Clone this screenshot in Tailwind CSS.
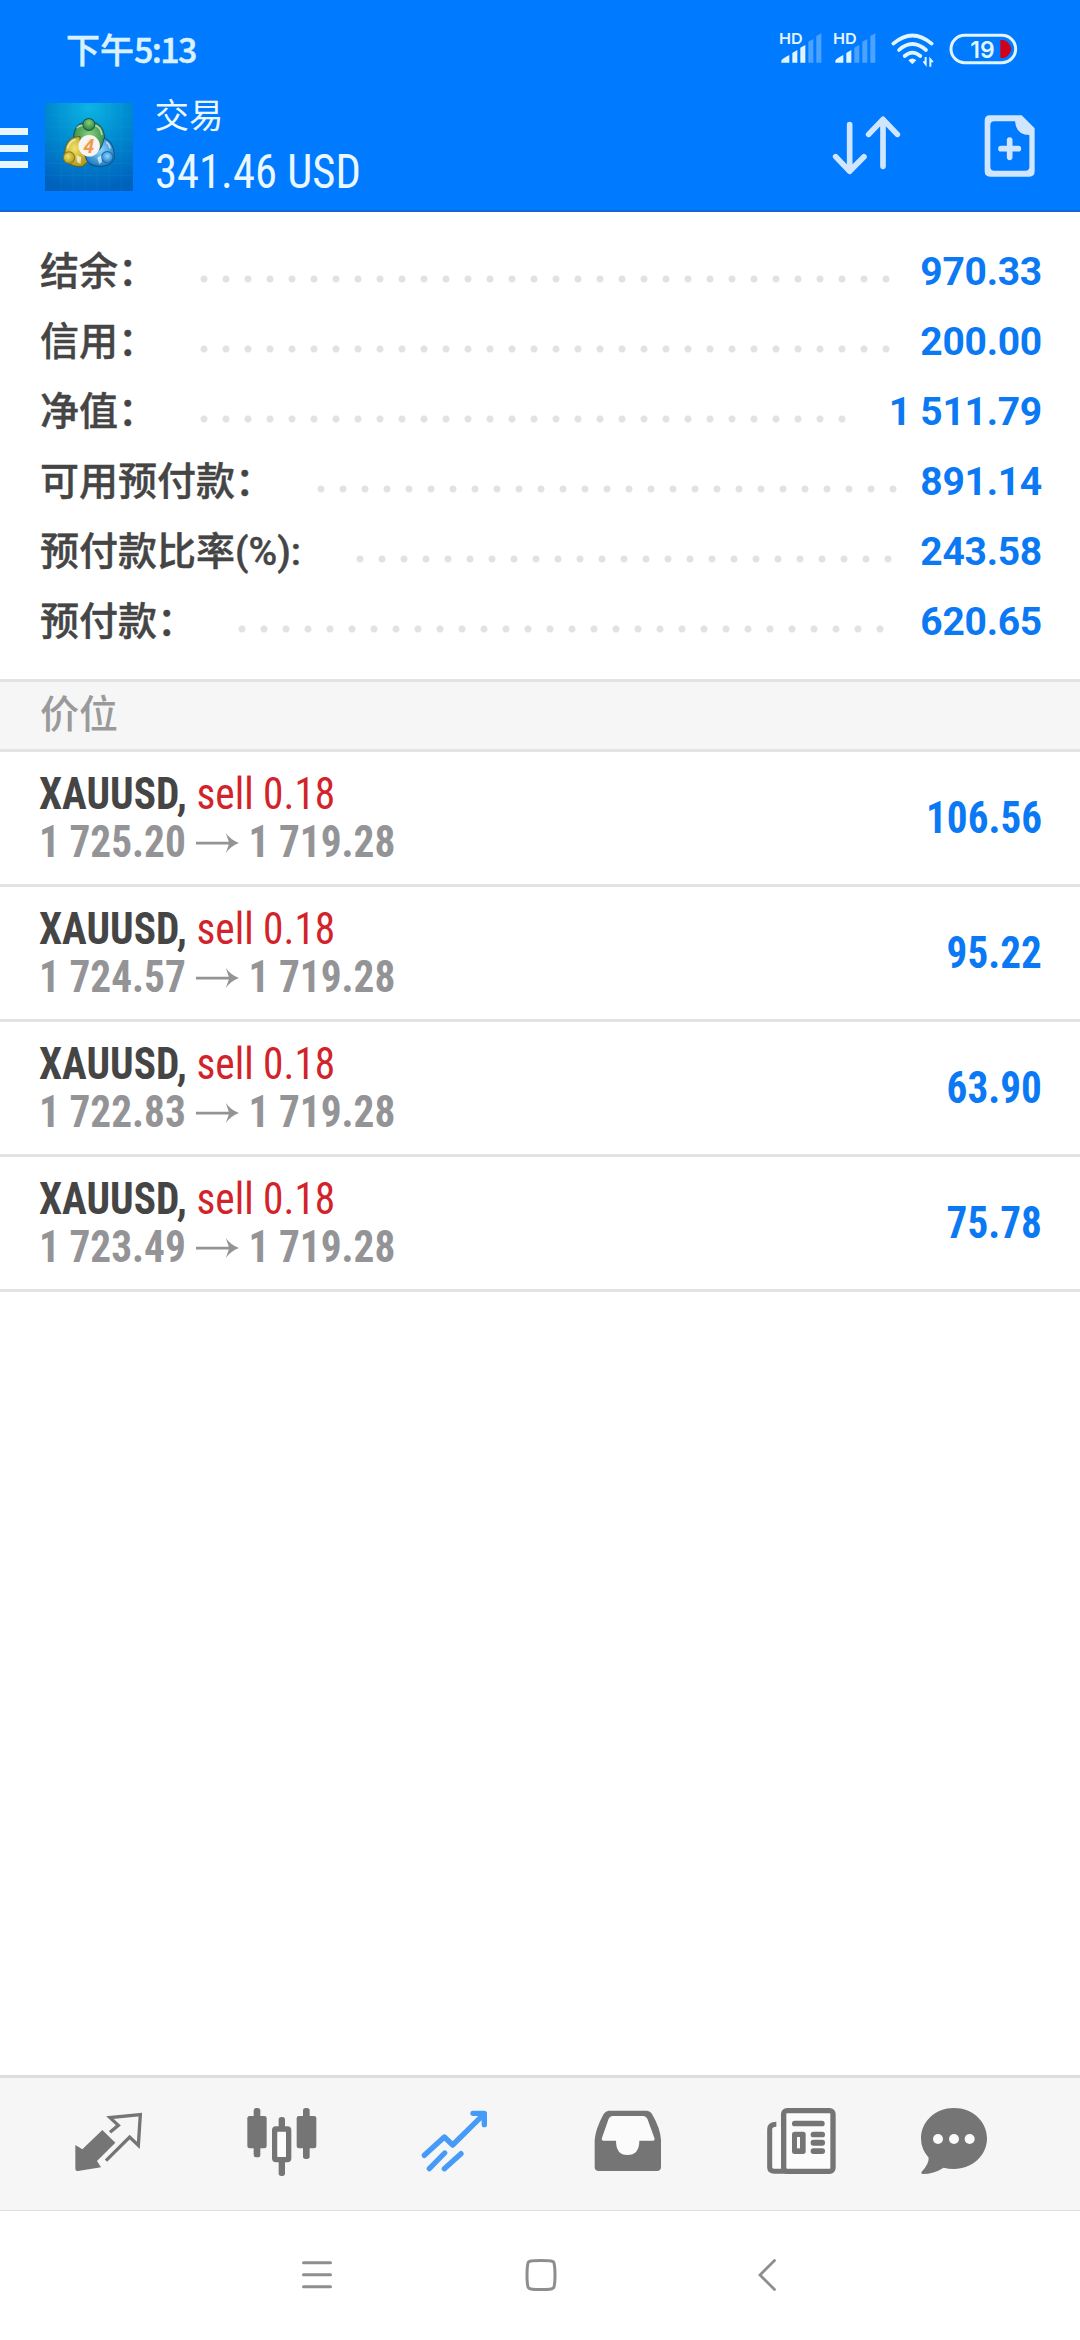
<!DOCTYPE html>
<html lang="zh-CN">
<head>
<meta charset="utf-8">
<title>交易</title>
<script src="https://cdn.jsdelivr.net/npm/@tailwindcss/browser@4"></script>
</head>
<body class="bg-white">
<div class="flex h-[2340px] w-[1080px] flex-col overflow-hidden bg-white font-['Roboto','Noto_Sans_CJK_SC',sans-serif] text-[#454545]">

  <header class="flex h-[212px] shrink-0 flex-col border-b-2 border-[#1266d6] bg-[#007aff] text-[#eaf7ff]">
    <div class="flex h-[96px] shrink-0 items-start justify-between pl-[66px] pr-[59px] pt-[30px]">
      <div class="-mt-px font-['Noto_Sans_CJK_SC',sans-serif] text-[34px] font-medium leading-[40px] text-[#d9f1ff] [-webkit-text-stroke:0.5px]">下午<span class="tracking-[-1.6px]">5:13</span></div>
      <svg class="h-[40px] w-[243.33px]" viewBox="50 90 730 120" fill="#e2f5ff">
        <g font-family="Inter, sans-serif" font-weight="600" font-size="45">
          <text x="53" y="132" textLength="71" lengthAdjust="spacingAndGlyphs">HD</text>
          <text x="215" y="132" textLength="71" lengthAdjust="spacingAndGlyphs">HD</text>
        </g>
        <path d="M60 188V182Q62 176 84 165V188ZM93 188V159L108 150V188ZM117 188V143L132 135V188Z"/>
        <path d="M141 188V125L156 117V188ZM165 188V108L180 100V188Z" fill="#4ca3ff"/>
        <path d="M222 188V182Q224 176 246 165V188ZM255 188V159L270 150V188Z"/>
        <path d="M279 188V143L294 135V188ZM303 188V125L318 117V188ZM327 188V108L342 100V188Z" fill="#4ca3ff"/>
        <g fill="none" stroke="#e2f5ff" stroke-width="11" stroke-linecap="round">
          <path d="M396 131Q453 82 511 131"/>
          <path d="M413 150Q453 114 494 150"/>
          <path d="M430 168Q453 148 477 168"/>
        </g>
        <path d="M441 181Q453 170 465 181L453 193Z"/>
        <path d="M490 171H496V201L485 187V184H490ZM504 200V170L516 184V187H510V200Z"/>
        <rect x="569" y="106" width="194" height="82" rx="41" fill="none" stroke="#e2f5ff" stroke-width="9"/>
        <text x="627" y="173" font-family="Inter, sans-serif" font-weight="600" font-size="70" textLength="73" lengthAdjust="spacingAndGlyphs">19</text>
        <path d="M717 120H727Q745 125 750 147Q745 170 727 174H717Z" fill="#d0021b"/>
      </svg>
    </div>

    <div class="flex h-[114px] items-start">
      <div class="mt-[32px] flex w-[28px] flex-col gap-[9.5px]">
        <div class="h-[7px] bg-[#e8f6ff]"></div>
        <div class="h-[7px] bg-[#e8f6ff]"></div>
        <div class="h-[7px] bg-[#e8f6ff]"></div>
      </div>
      <svg class="ml-[16.5px] mt-[6.5px] size-[88px]" viewBox="28 24 263 263">
        <defs>
          <radialGradient id="sky" cx="0.5" cy="0.05" r="0.95"><stop offset="0" stop-color="#0cb4e4"/><stop offset="0.5" stop-color="#0089cf"/><stop offset="1" stop-color="#0062bd"/></radialGradient>
          <radialGradient id="green" cx="0.5" cy="0.35" r="0.6"><stop offset="0" stop-color="#8ad07c"/><stop offset="1" stop-color="#2c8540"/></radialGradient>
          <radialGradient id="gold" cx="0.4" cy="0.4" r="0.6"><stop offset="0" stop-color="#f2e265"/><stop offset="1" stop-color="#b39a20"/></radialGradient>
          <radialGradient id="blue" cx="0.5" cy="0.4" r="0.6"><stop offset="0" stop-color="#8fd8ff"/><stop offset="1" stop-color="#1f7cc4"/></radialGradient>
        </defs>
        <rect x="28" y="24" width="263" height="263" fill="url(#sky)"/>
        <path d="M76 24V287M112 24V287M148 24V287M184 24V287M220 24V287M256 24V287M28 60H291M28 96H291M28 132H291M28 168H291M28 204H291M28 240H291" stroke="#35c0ee" stroke-opacity="0.16" stroke-width="2"/>
        <g stroke="#155a50" stroke-width="3">
          <path d="M114 140Q110 96 138 84H182Q210 100 206 142Q196 176 160 186Q120 174 114 140Z" fill="url(#green)"/>
          <path d="M132 124C96 124 84 156 88 184C92 210 124 218 142 212L160 196Q134 172 132 124Z" fill="url(#gold)" stroke="#5c6420"/>
          <path d="M204 130C226 134 238 164 234 192C222 218 180 218 160 204Q146 192 152 178Q196 180 204 130Z" fill="url(#blue)" stroke="#15508a"/>
          <circle cx="159" cy="88" r="18" fill="url(#green)"/>
          <circle cx="100" cy="187" r="17" fill="url(#gold)" stroke="#8a7a1c"/>
          <circle cx="214" cy="186" r="17" fill="url(#blue)" stroke="#1b6cb0"/>
        </g>
        <path d="M124 98Q132 90 138 92M180 92Q194 96 198 118M96 158Q102 138 118 134M222 158Q220 146 212 142" fill="none" stroke="#fff" stroke-opacity="0.6" stroke-width="5" stroke-linecap="round"/>
        <path d="M122 180L136 186L134 206L124 200ZM196 180L184 188L190 206L198 200Z" fill="#fff" fill-opacity="0.65"/>
        <circle cx="160" cy="152" r="32" fill="#f7f4f2"/>
        <text x="159" y="172" text-anchor="middle" font-family="Open Sans, sans-serif" font-style="italic" font-weight="700" font-size="56" fill="#f39a4a">4</text>
      </svg>
      <div class="ml-[22px] flex flex-col">
        <div class="-mt-[3px] font-['Noto_Sans_CJK_SC',sans-serif] text-[34.5px] leading-[40px]">交易</div>
        <div class="mt-[11px] origin-left scale-x-[0.93] font-['Roboto_Condensed',sans-serif] text-[48px] leading-[56px]">341.46 USD</div>
      </div>
      <svg class="ml-auto mt-[14px] h-[70px] w-[80px]" viewBox="200 330 240 210" fill="none" stroke="#cfe6fe" stroke-width="17" stroke-linecap="round" stroke-linejoin="round">
        <path d="M265 374V512M223 470L265 514L308 470"/>
        <path d="M365 499V360M322 403L365 358L408 403"/>
      </svg>
      <svg class="ml-[72px] mr-[40px] mt-[14px] h-[70px] w-[60px]" viewBox="655 330 180 210">
        <path d="M685 346H780L819 385V514Q819 530 803 530H685Q669 530 669 514V362Q669 346 685 346ZM698 364Q686 364 686 376V500Q686 512 698 512H791Q803 512 803 500V405Q763 405 760 364Z" fill="#cfe6fe" fill-rule="evenodd"/>
        <path d="M744 420V472M718 446H770" stroke="#cfe6fe" stroke-width="17" stroke-linecap="round"/>
      </svg>
    </div>
  </header>

  <section id="summary" class="flex h-[467px] shrink-0 flex-col pl-[40px] pr-[38px] pt-[24px] text-[39px] font-medium"></section>

  <div class="flex h-[73px] shrink-0 items-center border-y-3 border-[#e3e3e3] bg-[#f6f6f6] pb-[9px] pl-[40px] font-['Noto_Sans_CJK_SC',sans-serif] text-[39px] font-medium text-[#9a9a9c]">价位</div>

  <section id="positions" class="flex flex-col font-['Roboto_Condensed',sans-serif]"></section>

  <nav class="mt-auto flex h-[136px] shrink-0 items-start gap-[93px] border-b border-t-3 border-b-[#dedede] border-t-[#dedede] bg-[#f6f6f6] pl-[69px] pt-[24px] text-[#757575]">
    <svg class="size-[80px] shrink-0" viewBox="87 126 240 240">
      <path d="M187 210L226 248L171 303L183 322L114 333Q106 334 106 326V255L127 268Z" fill="currentColor"/>
      <path d="M210 217L235 196L210 173L301 164L295 256L269 231L198 302" fill="none" stroke="currentColor" stroke-width="10"/>
    </svg>
    <svg class="size-[80px] shrink-0" viewBox="604 126 240 240" fill="currentColor">
      <rect x="620" y="168" width="58" height="97" rx="7"/><rect x="639" y="144" width="20" height="148" rx="8"/>
      <rect x="768" y="168" width="59" height="97" rx="7"/><rect x="787" y="144" width="20" height="153" rx="8"/>
      <rect x="714" y="171" width="19" height="40" rx="8"/><rect x="714" y="295" width="19" height="53" rx="8"/>
      <rect x="702" y="207" width="42" height="92" rx="4" fill="none" stroke="currentColor" stroke-width="16"/>
      <rect x="711" y="216" width="24" height="74" rx="5" fill="#fdfdfd"/>
    </svg>
    <svg class="size-[80px] shrink-0 text-[#459bf7]" viewBox="1124 126 240 240" fill="none" stroke="currentColor" stroke-width="16" stroke-linecap="round" stroke-linejoin="round">
      <path d="M1152 286L1212 231L1237 255L1330 163M1298 160H1332V194M1167 326L1213 279M1212 326L1262 281"/>
      <path d="M1310 160H1332V184Z" fill="currentColor" stroke-width="6"/>
    </svg>
    <svg class="size-[80px] shrink-0" viewBox="143 126 240 240">
      <path d="M205 152H320Q330 153 335 162Q360 205 362 240V320Q362 333 349 333H176Q163 333 163 320V240Q166 205 190 162Q196 153 205 152Z" fill="currentColor"/>
      <path d="M216 168H309Q317 168 321 176L343 236Q343 242 338 242H297Q297 285 261 285Q227 285 227 242H189Q184 242 184 236L205 176Q209 168 216 168Z" fill="#fbfbfb"/>
    </svg>
    <svg class="size-[80px] shrink-0" viewBox="662 126 240 240" fill="currentColor">
      <path d="M700 326V205Q700 199 707 199H722V330H700Z" fill="#fbfbfb"/>
      <rect x="730" y="152" width="148" height="182" rx="10" fill="#fbfbfb" stroke="currentColor" stroke-width="16"/>
      <path d="M708 193Q688 193 688 208V322Q688 334 702 334H740" fill="none" stroke="currentColor" stroke-width="15"/>
      <rect x="755" y="182" width="98" height="17" rx="8"/>
      <rect x="755" y="215" width="41" height="67" rx="8"/><rect x="770" y="231" width="9" height="34" fill="#fbfbfb"/>
      <rect x="811" y="215" width="43" height="17" rx="8"/><rect x="811" y="239" width="43" height="18" rx="8"/><rect x="811" y="265" width="43" height="17" rx="8"/>
    </svg>
    <svg class="-ml-[20.5px] size-[80px] shrink-0" viewBox="1119 126 240 240">
      <path d="M1239 144C1294 144 1338 184 1338 235S1294 327 1239 327Q1222 327 1208 323Q1178 342 1145 342Q1139 341 1142 335Q1164 312 1163 293Q1140 268 1140 235C1140 184 1184 144 1239 144Z" fill="currentColor"/>
      <g fill="#fbfbfb"><circle cx="1191" cy="237" r="15"/><circle cx="1239" cy="237" r="15"/><circle cx="1286" cy="237" r="15"/></g>
    </svg>
  </nav>

  <div class="flex h-[129px] shrink-0 items-start justify-between pl-[300px] pr-[302px] pt-[46px]">
    <svg class="h-[36px] w-[34px]" viewBox="0 0 34 36" stroke="#8e8e8e" stroke-width="3" stroke-linecap="round"><path d="M3.5 5.7H30.5M3.5 17.7H30.5M3.5 29.7H30.5"/></svg>
    <svg class="-ml-[11px] h-[36px] w-[34px]" viewBox="0 0 34 36" fill="none" stroke="#8e8e8e" stroke-width="3"><path d="M17 3.5C27 3.5 29.500 4 30 6Q31 10 31 18T30 30C29.500 32 27 32.500 17 32.500S4.500 32 4 30Q3 26 3 18T4 6C4.500 4 7 3.500 17 3.500Z"/></svg>
    <svg class="h-[36px] w-[20px]" viewBox="0 0 20 36" fill="none" stroke="#8e8e8e" stroke-width="2.800" stroke-linecap="round"><path d="M16.500 3.500L2 18L16.500 32.500"/></svg>
  </div>
</div>

<script>
  // [label, value, left edge of the leader dots, dot count]
  const summary = [
    ['结余：', '970.33', 152.5, 32],
    ['信用：', '200.00', 152.5, 32],
    ['净值：', '1 511.79', 152.5, 30],
    ['可用预付款：', '891.14', 269.6, 27],
    ['预付款比率(%):', '243.58', 308.5, 25],
    ['预付款：', '620.65', 191.4, 30],
  ];
  document.getElementById('summary').innerHTML = summary.map(([label, value, start, dots]) => `
    <div class="flex h-[70px] items-center">
      <div class="mt-[2px] shrink-0 whitespace-nowrap [-webkit-text-stroke:0.4px]" style="width:${start}px">${label}</div>
      <div class="mt-[16px] h-[8px] shrink-0 bg-[radial-gradient(circle,#e2e2e2_3px,transparent_4px)] bg-[length:22px_8px]" style="width:${dots * 22}px"></div>
      <div class="ml-auto mt-[2px] whitespace-nowrap font-bold tracking-[-0.25px] text-[#0b79f3]">${value}</div>
    </div>`).join('');

  const positions = [
    ['1 725.20', '106.56'],
    ['1 724.57', '95.22'],
    ['1 722.83', '63.90'],
    ['1 723.49', '75.78'],
  ];
  document.getElementById('positions').innerHTML = positions.map(([open, profit]) => `
    <div class="flex h-[135px] items-center justify-between border-b-3 border-[#e3e3e3] pl-[39px] pr-[38px]">
      <div class="mt-[2px] origin-left scale-x-[0.95] text-[43.5px] leading-[48px]">
        <div class="flex gap-[10px]"><span class="font-bold">XAUUSD,</span><span class="text-[#d2232a]">sell 0.18</span></div>
        <div class="flex items-center font-bold text-[#949497]">
          <span>${open}</span>
          <svg class="ml-[10px] mr-[10px] h-[20px] w-[46px]" viewBox="0 0 45 20" preserveAspectRatio="none"><path d="M0 8.700H34L31 0Q36 7 44.500 10Q36 13 31 20L34 11.500H0Z" fill="currentColor"/></svg>
          <span>1 719.28</span>
        </div>
      </div>
      <div class="origin-right scale-x-[0.935] text-[44px] font-bold text-[#0b79f3]">${profit}</div>
    </div>`).join('');
</script>
</body>
</html>
